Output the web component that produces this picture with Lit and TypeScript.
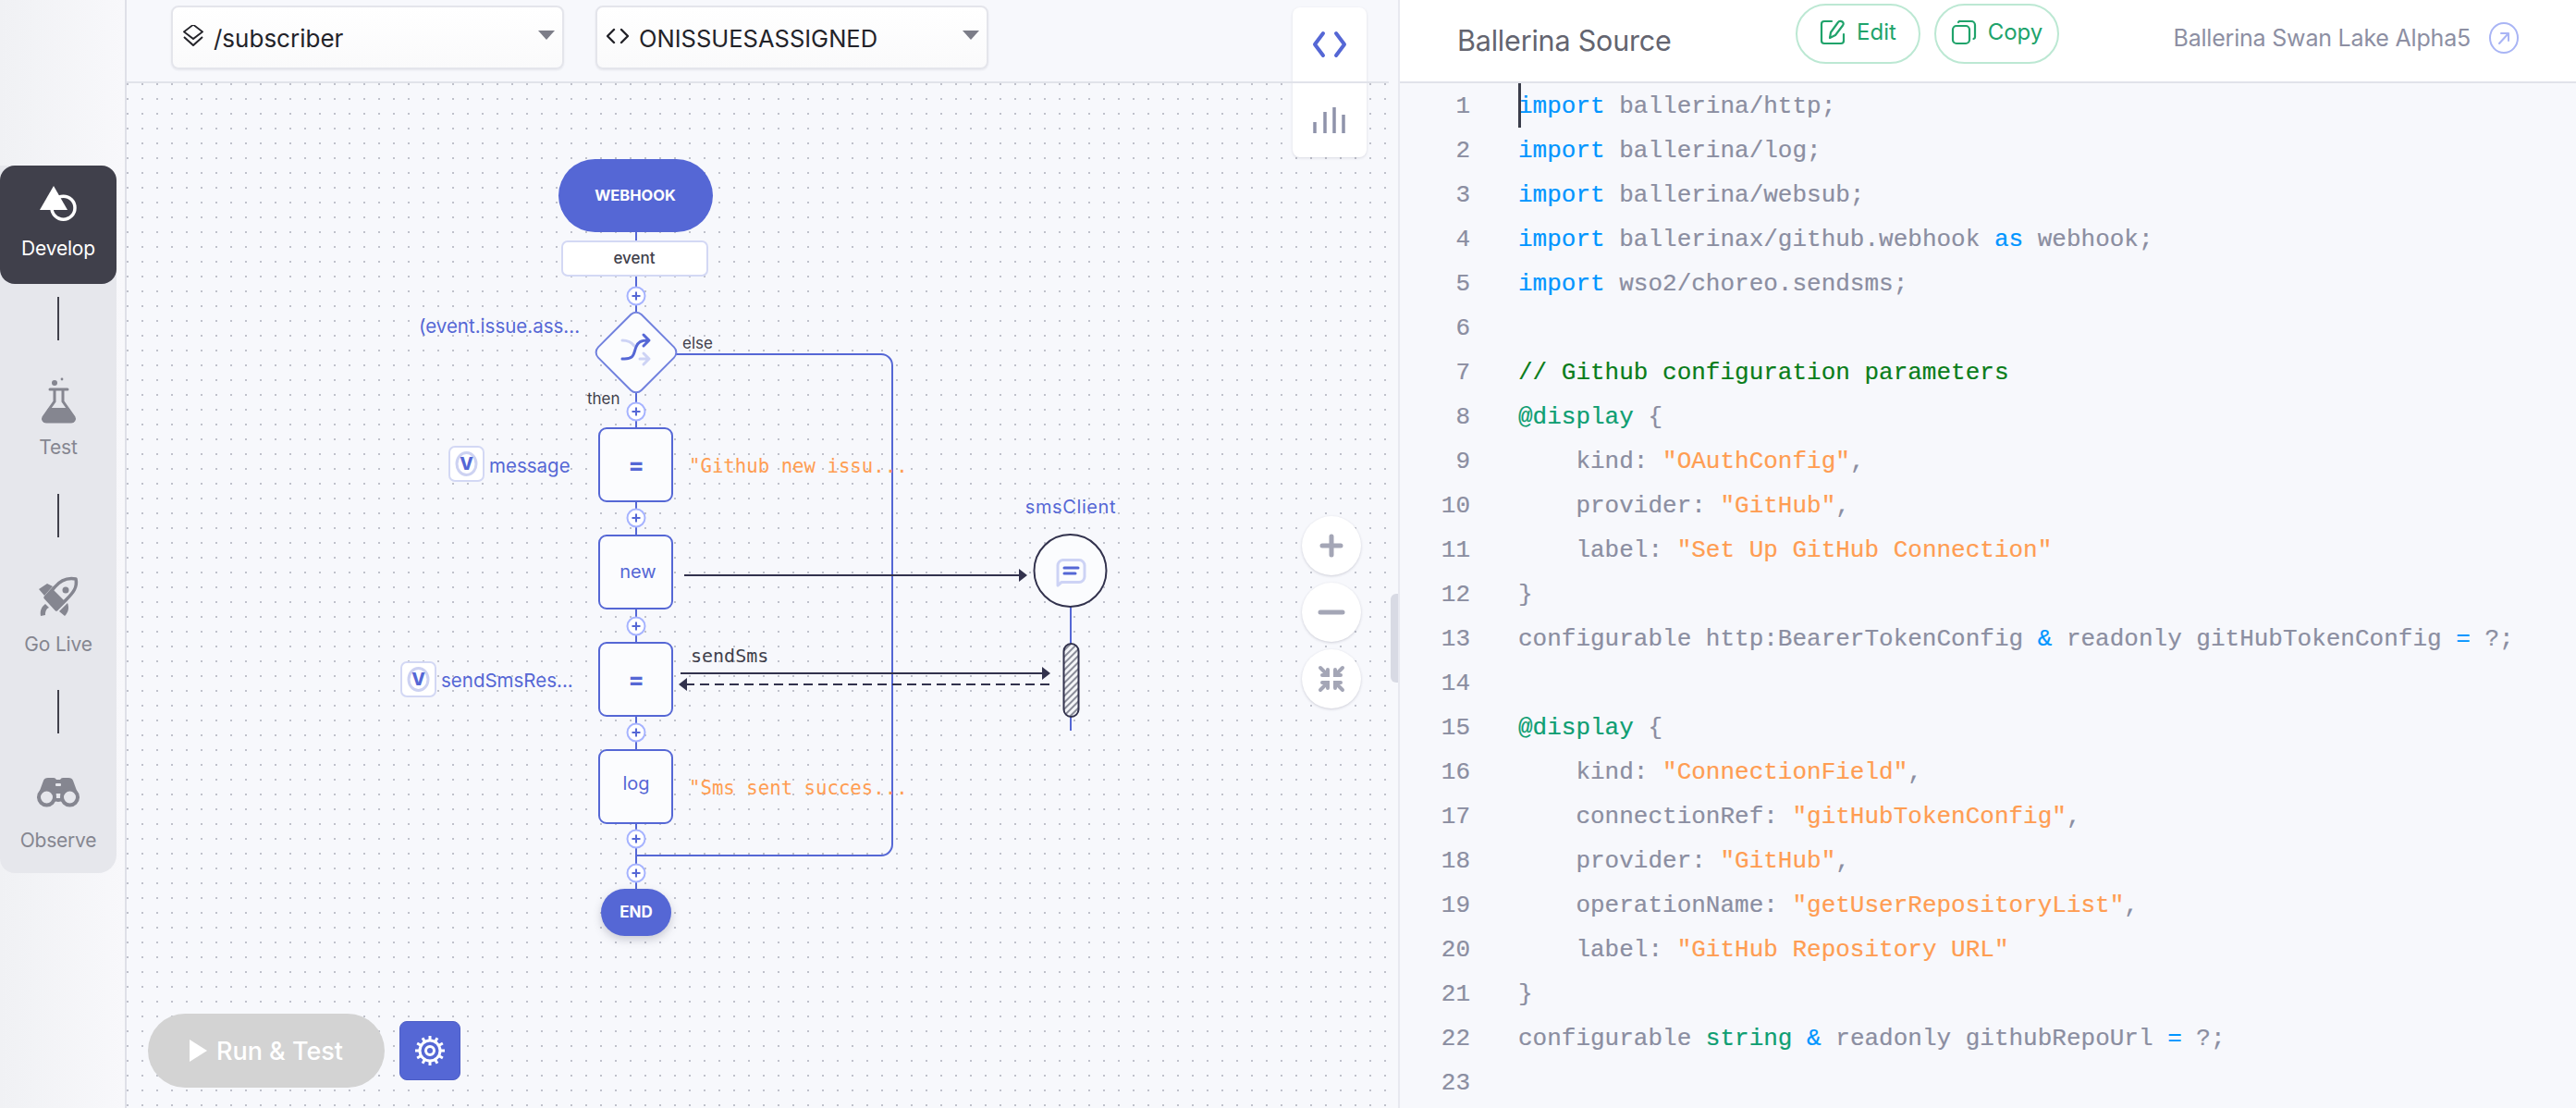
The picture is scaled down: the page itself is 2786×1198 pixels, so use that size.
import { LitElement, css, html, svg } from "lit";
import { customElement } from "lit/decorators.js";

const SOURCE = [
	"import ballerina/http;",
	"import ballerina/log;",
	"import ballerina/websub;",
	"import ballerinax/github.webhook as webhook;",
	"import wso2/choreo.sendsms;",
	"",
	"// Github configuration parameters",
	"@display {",
	'    kind: "OAuthConfig",',
	'    provider: "GitHub",',
	'    label: "Set Up GitHub Connection"',
	"}",
	"configurable http:BearerTokenConfig & readonly gitHubTokenConfig = ?;",
	"",
	"@display {",
	'    kind: "ConnectionField",',
	'    connectionRef: "gitHubTokenConfig",',
	'    provider: "GitHub",',
	'    operationName: "getUserRepositoryList",',
	'    label: "GitHub Repository URL"',
	"}",
	"configurable string & readonly githubRepoUrl = ?;",
	"",
];

const TOKEN = /("[^"]*")|(@\w+)|\b(import|as)\b|\b(string)\b|([&=])/g;

function highlight(line: string) {
	if (line.startsWith("//")) return html`<span class="comment">${line}</span>`;
	const parts = [];
	let last = 0;
	for (const m of line.matchAll(TOKEN)) {
		parts.push(line.slice(last, m.index));
		const cls = m[1] ? "str" : m[2] || m[4] ? "ann" : "kw";
		parts.push(html`<span class=${cls}>${m[0]}</span>`);
		last = m.index! + m[0].length;
	}
	parts.push(line.slice(last));
	return parts;
}

const MAIN_X = 688;

const plus = (y: number) => svg`
	<circle class="plus" cx=${MAIN_X} cy=${y} r="9.5"></circle>
	<path class="plus-mark" d="M${MAIN_X - 4.5} ${y}h9M${MAIN_X} ${y - 4.5}v9"></path>
`;

const node = (y: number, label: string, labelY: number, eq = false) => svg`
	<rect class="node" x="648" y=${y} width="79" height="79" rx="8"></rect>
	<text class=${eq ? "node-eq" : "node-label"} x=${MAIN_X + (label === "new" ? 2 : 0)} y=${labelY}>${label}</text>
`;

const badge = (x: number, y: number) => svg`
	<rect class="badge" x=${x} y=${y} width="37" height="37" rx="6"></rect>
	<ellipse class="badge-ring" cx=${x + 18.5} cy=${y + 18.5} rx="10.5" ry="12"></ellipse>
	<text class="badge-v" x=${x + 18.5} y=${y + 25}>V</text>
`;

const arrowHead = (tip: number, y: number, dir: 1 | -1) => svg`
	<path class="head" d="M${tip} ${y}l${-9 * dir} -7v14z"></path>
`;

@customElement("app-root")
export class AppRoot extends LitElement {
	static styles = css`
		:host {
			display: flex;
			width: 2786px;
			height: 1198px;
			overflow: hidden;
			background: #f7f8fc;
			font-family: Inter, "Noto Sans", sans-serif;
		}

		.sidebar {
			box-sizing: border-box;
			flex: none;
			width: 137px;
			padding-top: 179px;
			background: linear-gradient(90deg, #f0f1f4, #f8f8fb);
			border-right: 2px solid #dfe0e8;
		}
		.rail {
			box-sizing: border-box;
			display: flex;
			flex-direction: column;
			align-items: center;
			width: 126px;
			height: 765px;
			background: #e6e7ec;
			border-radius: 0 20px 20px 16px;
		}
		.nav {
			display: flex;
			flex-direction: column;
			align-items: center;
			width: 100%;
			height: 138px;
			padding-top: 26px;
			box-sizing: border-box;
			color: #858690;
		}
		.nav svg {
			display: block;
			width: 48px;
			height: 48px;
			overflow: visible;
		}
		.nav span {
			margin-top: 13px;
			font-size: 21px;
			line-height: 30px;
			letter-spacing: -0.2px;
		}
		.nav.active {
			height: 129px;
			padding-top: 17px;
			color: #fff;
			background: #40404b;
			border-radius: 16px;
		}
		.nav.active span {
			margin-top: 10px;
		}
		.sep {
			flex: none;
			width: 2px;
			height: 47px;
			margin: 14px 0;
			background: #40404b;
		}

		.main {
			position: relative;
			flex: none;
			width: 1375px;
			height: 1198px;
		}
		.topbar {
			position: relative;
			z-index: 2;
			box-sizing: border-box;
			display: flex;
			gap: 34px;
			height: 90px;
			margin-right: 10px;
			padding: 6px 0 0 48px;
			border-bottom: 2px solid #e1e3ea;
		}
		.select {
			box-sizing: border-box;
			display: flex;
			align-items: center;
			gap: 10px;
			width: 425px;
			height: 69px;
			padding: 0 8px 0 10px;
			background: linear-gradient(180deg, #fff, #fafafb);
			border: 2px solid #e4e5eb;
			border-radius: 8px;
			color: #232329;
			font-size: 26px;
			box-shadow: 0 1px 2px rgba(40, 40, 70, 0.08);
		}
		.select svg {
			flex: none;
			width: 24px;
			height: 24px;
			margin-top: -4px;
		}
		.select span {
			flex: 1;
			margin-top: 1px;
		}
		.select.upper {
			gap: 11px;
			font-size: 25.5px;
		}
		.caret {
			flex: none;
			width: 0;
			height: 0;
			margin: -6px 0 0 0;
			border-left: 9px solid transparent;
			border-right: 9px solid transparent;
			border-top: 10px solid #7c7d88;
		}

		.canvas {
			position: absolute;
			inset: 90px 0 0 0;
			background-image: radial-gradient(circle at 1px 1px, #bfc1cb 1px, transparent 1.3px);
			background-size: 16px 16px;
		}
		.diagram {
			position: absolute;
			left: 0;
			top: 0;
			width: 1375px;
			height: 1108px;
		}
		.diagram text {
			font-family: Inter, "Noto Sans", sans-serif;
			dominant-baseline: central;
		}
		.diagram .mono {
			font-family: "DejaVu Sans Mono", monospace;
		}
		.edge {
			fill: none;
			stroke: #5567d5;
			stroke-width: 2;
		}
		.call {
			stroke: #32324d;
			stroke-width: 2;
		}
		.dashed {
			stroke-dasharray: 10 6;
		}
		.head {
			fill: #32324d;
		}
		.plus {
			fill: #fff;
			stroke: #a6b3ff;
			stroke-width: 2;
		}
		.plus-mark {
			fill: none;
			stroke: #5567d5;
			stroke-width: 2;
		}
		.node {
			fill: #fbfcfe;
			stroke: #5567d5;
			stroke-width: 2;
		}
		.node-label {
			fill: #5567d5;
			font-size: 20px;
			text-anchor: middle;
		}
		.node-eq {
			fill: #5567d5;
			font-size: 26px;
			font-weight: 700;
			text-anchor: middle;
		}
		.terminal {
			fill: #5567d5;
		}
		.end {
			filter: drop-shadow(0 4px 5px rgba(40, 40, 70, 0.22));
		}
		.terminal-text {
			fill: #fff;
			font-weight: 700;
			text-anchor: middle;
		}
		.param {
			fill: #fff;
			stroke: #d3d8f4;
			stroke-width: 2;
		}
		.param-text {
			fill: #40404b;
			font-size: 17px;
			font-weight: 500;
			text-anchor: middle;
		}
		.diamond {
			fill: #fbfcfe;
			stroke: #7181de;
			stroke-width: 2;
		}
		.var {
			fill: #5567d5;
			font-size: 20.5px;
		}
		.small {
			fill: #40404b;
			font-size: 17px;
		}
		.value {
			fill: #ff9d52;
			font-size: 20.7px;
		}
		.call-label {
			fill: #40404b;
			font-size: 20px;
		}
		.client {
			fill: #fbfcfe;
			stroke: #32324d;
			stroke-width: 2;
		}
		.client-name {
			fill: #5567d5;
			font-size: 20px;
			letter-spacing: 0.6px;
			text-anchor: middle;
		}
		.activation {
			fill: url(#hatch);
			stroke: #32324d;
			stroke-width: 2;
		}
		.badge {
			fill: #fff;
			stroke: #d3d8f4;
			stroke-width: 2;
		}
		.badge-ring {
			fill: none;
			stroke: #cdd2f2;
			stroke-width: 3;
		}
		.diagram .badge-v {
			fill: #5567d5;
			font-size: 19px;
			font-weight: 800;
			text-anchor: middle;
			dominant-baseline: auto;
		}

		.tools {
			position: absolute;
			z-index: 1;
			left: 1261px;
			top: 8px;
			width: 80px;
			height: 162px;
			background: #fff;
			border-radius: 8px;
			box-shadow: 0 1px 3px rgba(40, 40, 70, 0.14);
		}
		.tools svg {
			display: block;
			width: 44px;
			height: 44px;
			margin: 17px auto 0;
		}
		.tools svg + svg {
			margin-top: 40px;
		}
		.zoom {
			position: absolute;
			left: 1271px;
			top: 558px;
			display: flex;
			flex-direction: column;
			gap: 8px;
		}
		.zoom div {
			display: flex;
			align-items: center;
			justify-content: center;
			width: 64px;
			height: 64px;
			background: #fff;
			border-radius: 50%;
			box-shadow: 0 1px 3px rgba(40, 40, 70, 0.2);
		}
		.zoom svg {
			width: 32px;
			height: 32px;
		}
		.scroll {
			position: absolute;
			right: 0;
			top: 642px;
			width: 8px;
			height: 96px;
			background: #d8dae4;
			border-radius: 6px 0 0 6px;
		}
		.actions {
			position: absolute;
			left: 23px;
			top: 1006px;
			display: flex;
			align-items: center;
			gap: 16px;
		}
		.run {
			box-sizing: border-box;
			display: flex;
			align-items: center;
			justify-content: center;
			gap: 10px;
			width: 256px;
			height: 80px;
			background: #d3d3d3;
			border-radius: 40px;
			color: #fff;
			font-size: 27px;
			font-weight: 500;
		}
		.run i {
			width: 0;
			height: 0;
			border-left: 19px solid #fff;
			border-top: 12px solid transparent;
			border-bottom: 12px solid transparent;
		}
		.gear {
			display: flex;
			align-items: center;
			justify-content: center;
			width: 66px;
			height: 64px;
			background: #5567d5;
			border: 1px solid #4d5ec6;
			box-sizing: border-box;
			border-radius: 8px;
		}
		.gear svg {
			width: 36px;
			height: 36px;
		}

		.panel {
			flex: 1;
			min-width: 0;
			border-left: 2px solid #e8e9f0;
		}
		.panel-head {
			box-sizing: border-box;
			display: flex;
			align-items: flex-start;
			height: 90px;
			background: #fff;
			border-bottom: 2px solid #e1e3ea;
		}
		.title {
			width: 366px;
			padding-left: 62px;
			color: #63646f;
			font-size: 30.5px;
			line-height: 88px;
			letter-spacing: -0.2px;
		}
		.pill {
			box-sizing: border-box;
			display: flex;
			align-items: center;
			justify-content: center;
			gap: 12px;
			width: 135px;
			height: 65px;
			margin: 4px 15px 0 0;
			padding-bottom: 4px;
			border: 2px solid #bce8d3;
			border-radius: 33px;
			color: #20a36b;
			font-size: 24px;
		}
		.pill svg {
			width: 28px;
			height: 28px;
		}
		.version {
			display: flex;
			align-items: center;
			gap: 20px;
			height: 82px;
			margin-left: auto;
			padding-right: 62px;
			color: #8d8fa3;
			font-size: 25px;
			letter-spacing: -0.2px;
		}
		.version svg {
			width: 32px;
			height: 34px;
		}
		.code {
			position: relative;
			padding-top: 1px;
			font-family: "Liberation Mono", monospace;
			font-size: 26px;
			line-height: 48px;
			color: #8b8ea1;
			-webkit-text-stroke: 0.2px currentColor;
		}
		.row {
			display: flex;
			height: 48px;
			white-space: pre;
		}
		.num {
			flex: none;
			width: 76px;
			margin-right: 52px;
			text-align: right;
		}
		.kw {
			color: #0095ff;
		}
		.str {
			color: #ff9d52;
		}
		.ann {
			color: #0e9e72;
		}
		.comment {
			color: #0a7d1a;
		}
		.cursor {
			position: absolute;
			left: 128px;
			top: 0;
			width: 3px;
			height: 48px;
			background: #3a3d4a;
		}
	`;

	private diagram() {
		return html`
			<svg class="diagram" viewBox="137 90 1375 1108">
				<defs>
					<pattern id="hatch" width="5" height="5" patternUnits="userSpaceOnUse" patternTransform="rotate(-45)">
						<rect width="5" height="5" fill="#f4f5f8"></rect>
						<rect width="5" height="2" fill="#8a8c99"></rect>
					</pattern>
				</defs>
				<path class="edge" d="M${MAIN_X} 251V961"></path>
				<path class="edge" d="M730 383H953a12 12 0 0 1 12 12V913a12 12 0 0 1 -12 12H${MAIN_X}"></path>

				<rect class="terminal" x="604" y="172" width="167" height="79" rx="39.5"></rect>
				<text class="terminal-text" x="687" y="211" font-size="16.5">WEBHOOK</text>
				<rect class="param" x="608" y="261" width="157" height="37" rx="6"></rect>
				<text class="param-text" x="686" y="279">event</text>

				${plus(320)}
				<rect class="diamond" x="655" y="348" width="66" height="66" rx="8" transform="rotate(45 688 381)"></rect>
				<path d="M673 368c6 0 10 2 13 6M692 388h9m-5 -6l6 6l-6 6" fill="none" stroke="#cdd3f5" stroke-width="3" stroke-linecap="round" stroke-linejoin="round"></path>
				<path d="M673 388c14 1 12 -6 15 -13c2 -5 5 -7 13 -7m-5 -6l6 6l-6 6" fill="none" stroke="#5567d5" stroke-width="3" stroke-linecap="round" stroke-linejoin="round"></path>
				<text class="var" x="453" y="352">(event.issue.ass...</text>
				<text class="small" x="738" y="371">else</text>
				<text class="small" x="635" y="431">then</text>
				${plus(445)}

				${node(463, "=", 502, true)}
				${badge(486, 483)}
				<text class="var" x="529" y="503">message</text>
				<text class="mono value" x="745" y="504">"Github new issu...</text>
				${plus(560)}

				${node(579, "new", 618)}
				<path class="call" d="M740 622H1103"></path>
				${arrowHead(1111, 622, 1)}
				${plus(677)}

				${node(695, "=", 734, true)}
				${badge(434, 716)}
				<text class="var" x="477" y="735">sendSmsRes...</text>
				<text class="mono call-label" x="747" y="709">sendSms</text>
				<path class="call" d="M736 728H1127"></path>
				${arrowHead(1136, 728, 1)}
				<path class="call dashed" d="M1135 740H742"></path>
				${arrowHead(734, 740, -1)}
				${plus(792)}

				${node(811, "log", 847)}
				<text class="mono value" x="745" y="852">"Sms sent succes...</text>
				${plus(907)}
				${plus(944)}

				<g class="end">
					<rect class="terminal" x="650" y="961" width="76" height="51" rx="25.5"></rect>
				</g>
				<text class="terminal-text" x="688" y="986" font-size="17">END</text>

				<text class="client-name" x="1158" y="548">smsClient</text>
				<path class="edge" d="M1158 656V790"></path>
				<circle class="client" cx="1157.5" cy="617" r="39"></circle>
				<path d="M1149 605.500h18a6 6 0 0 1 6 6v12a6 6 0 0 1 -6 6h-19l-4 3.500v-21.500a6 6 0 0 1 6 -6z" fill="none" stroke="#cdd3f5" stroke-width="3" stroke-linejoin="round"></path>
				<path d="M1151 614h15M1151 620h12" fill="none" stroke="#5567d5" stroke-width="3" stroke-linecap="round"></path>
				<rect class="activation" x="1150.500" y="696" width="16" height="79" rx="8"></rect>
			</svg>
		`;
	}

	render() {
		return html`
			<aside class="sidebar">
				<nav class="rail">
					<div class="nav active">
						<svg viewBox="0 0 48 48">
							<circle cx="29.500" cy="28.700" r="12.500" fill="none" stroke="currentColor" stroke-width="3.500"></circle>
							<path d="M19 5L34 31H4z" fill="currentColor"></path>
						</svg>
						<span>Develop</span>
					</div>
					<div class="sep"></div>
					<div class="nav">
						<svg viewBox="0 0 48 48">
							<circle cx="20" cy="6" r="3" fill="currentColor"></circle>
							<circle cx="28" cy="2" r="1.4" fill="currentColor"></circle>
							<path d="M15 13h19" stroke="currentColor" stroke-width="3" stroke-linecap="round"></path>
							<path d="M20 14v12L8 43c-1.500 2.500 .5 5 3 5h27c2.500 0 4.500 -2.500 3 -5L29 26V14" fill="none" stroke="currentColor" stroke-width="3"></path>
							<path d="M13.500 33h22l6 11c1 2.500 -1 5 -3 5H10c-2 0 -4 -2.500 -3 -5z" fill="currentColor"></path>
						</svg>
						<span>Test</span>
					</div>
					<div class="sep"></div>
					<div class="nav">
						<svg viewBox="0 0 48 48">
							<path d="M43 5C33 3 25 8 20 14L10 25L22 38L33 27C40 20 45 14 43 5Z" fill="none" stroke="currentColor" stroke-width="3.500" stroke-linejoin="round"></path>
							<path d="M10 25L18 16L31 29L22 38Z" fill="currentColor"></path>
							<circle cx="32" cy="17" r="3.500" fill="currentColor"></circle>
							<path d="M3 16L12 10L18 13L9 23Z" fill="currentColor"></path>
							<path d="M5 45C4 39 6 35 10 32L14 36C11 37 10 40 10 44Z" fill="currentColor"></path>
							<path d="M25 40L34 31C36 36 35 41 31 45Z" fill="currentColor"></path>
						</svg>
						<span>Go Live</span>
					</div>
					<div class="sep"></div>
					<div class="nav">
						<svg viewBox="0 0 48 48">
							<path d="M1 30L8 11Q9 8 13 8H19Q21 8 22 10H26Q27 8 29 8H35Q39 8 40 11L47 30L24 34Z" fill="currentColor"></path>
							<rect x="21" y="14" width="6" height="3" rx="1" fill="#e6e7ec"></rect>
							<rect x="21.500" y="25" width="5" height="5" fill="#e6e7ec"></rect>
							<circle cx="11.500" cy="29" r="8.500" fill="#e6e7ec" stroke="currentColor" stroke-width="4"></circle>
							<circle cx="36.500" cy="29" r="8.500" fill="#e6e7ec" stroke="currentColor" stroke-width="4"></circle>
						</svg>
						<span>Observe</span>
					</div>
				</nav>
			</aside>

			<section class="main">
				<div class="canvas">
					${this.diagram()}
					<div class="actions">
						<div class="run"><i></i>Run &amp; Test</div>
						<div class="gear">
							<svg viewBox="0 0 36 36">
								<circle cx="18" cy="18" r="11" fill="none" stroke="#fff" stroke-width="3"></circle>
								<circle cx="18" cy="18" r="4.500" fill="none" stroke="#fff" stroke-width="3"></circle>
								${Array.from({ length: 12 }, (_, i) => svg`
									<rect x="16.500" y="2" width="3" height="5" fill="#fff" transform="rotate(${i * 30} 18 18)"></rect>
								`)}
							</svg>
						</div>
					</div>
				</div>

				<header class="topbar">
					<div class="select">
						<svg viewBox="0 0 24 24" fill="none" stroke="#232329" stroke-width="2" stroke-linejoin="round">
							<path d="M12 2L22 11L12 20L2 11Z" transform="translate(0 -2) scale(1 .85)"></path>
							<path d="M2 15L12 24L22 15" transform="translate(0 -2)"></path>
						</svg>
						<span>/subscriber</span>
						<i class="caret"></i>
					</div>
					<div class="select upper">
						<svg viewBox="0 0 24 24" fill="none" stroke="#232329" stroke-width="2.400" stroke-linecap="round" stroke-linejoin="round">
							<path d="M8 5L1 12L8 19M16 5L23 12L16 19"></path>
						</svg>
						<span>ONISSUESASSIGNED</span>
						<i class="caret"></i>
					</div>
				</header>

				<div class="tools">
					<svg viewBox="0 0 44 44" fill="none" stroke="#5567d5" stroke-width="4" stroke-linecap="round" stroke-linejoin="round">
						<path d="M15 11L6 23L15 35M29 11L38 23L29 35"></path>
					</svg>
					<svg viewBox="0 0 44 44" fill="none" stroke="#8f93ab" stroke-width="3.500">
						<path d="M6 35V23M17 35V12M27 35V7M37 35V15"></path>
					</svg>
				</div>

				<div class="zoom">
					<div>
						<svg viewBox="0 0 32 32" fill="none" stroke="#a4a6b6" stroke-width="5" stroke-linecap="round">
							<path d="M6 16H26M16 6V26"></path>
						</svg>
					</div>
					<div>
						<svg viewBox="0 0 32 32" fill="none" stroke="#a4a6b6" stroke-width="5" stroke-linecap="round">
							<path d="M4 16H28"></path>
						</svg>
					</div>
					<div>
						<svg viewBox="0 0 32 32" fill="none" stroke="#a4a6b6" stroke-width="4" stroke-linecap="round">
							<path d="M4 4L12 12M12 6V12H6M28 4L20 12M20 6V12H26M4 28L12 20M12 26V20H6M28 28L20 20M20 26V20H26"></path>
						</svg>
					</div>
				</div>
				<div class="scroll"></div>
			</section>

			<section class="panel">
				<header class="panel-head">
					<div class="title">Ballerina Source</div>
					<div class="pill">
						<svg viewBox="0 0 28 28" fill="none" stroke="currentColor" stroke-width="2.200" stroke-linecap="round" stroke-linejoin="round">
							<path d="M13 2H5a3 3 0 0 0 -3 3V23a3 3 0 0 0 3 3H23a3 3 0 0 0 3 -3V16"></path>
							<path d="M11 20L12 14L20 3C21 1.500 23 1.500 24.500 2.500C26 3.500 26 5 25 6.500L17 17Z"></path>
						</svg>
						Edit
					</div>
					<div class="pill">
						<svg viewBox="0 0 28 28" fill="none" stroke="currentColor" stroke-width="2.200" stroke-linecap="round" stroke-linejoin="round">
							<rect x="2" y="7" width="18" height="19" rx="4"></rect>
							<path d="M8 3a2 2 0 0 1 2 -1H22a4 4 0 0 1 4 4V19a2 2 0 0 1 -1.500 2"></path>
						</svg>
						Copy
					</div>
					<div class="version">
						Ballerina Swan Lake Alpha5
						<svg viewBox="0 0 32 34" fill="none" stroke="#a9b5f5" stroke-width="2">
							<ellipse cx="16" cy="17" rx="15" ry="16"></ellipse>
							<path d="M11 23L21 12M13 12H21V20" stroke-linecap="round" stroke-linejoin="round"></path>
						</svg>
					</div>
				</header>
				<div class="code">
					<div class="cursor"></div>
					${SOURCE.map(
						(line, i) => html`<div class="row"><div class="num">${i + 1}</div><div>${highlight(line)}</div></div>`,
					)}
				</div>
			</section>
		`;
	}
}
